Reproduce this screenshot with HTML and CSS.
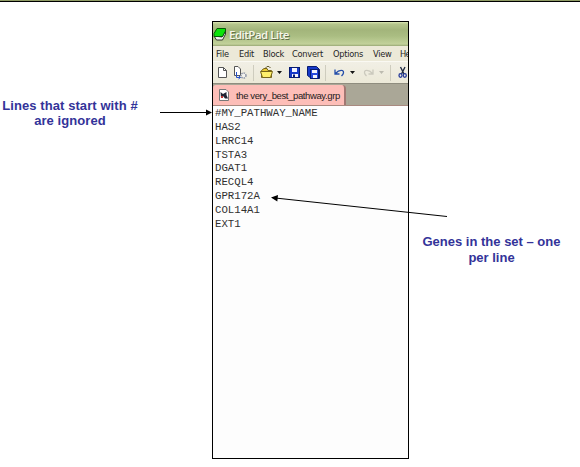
FILE: index.html
```
<!DOCTYPE html>
<html lang="en">
<head>
<meta charset="utf-8">
<title>Gene set file format</title>
<link rel="stylesheet" href="styles.css">
</head>
<body>
<div class="rule"></div>
<main class="figure">
  <p class="note note-left">Lines that start with #<br>are ignored</p>
  <section class="window">
    <header class="titlebar">
      <svg class="app-icon" width="15" height="16" viewBox="0 0 15 16">
        <path d="M1 9 L3.500 13 H9.500 L12.500 7 V4 L9 10Z" fill="#f4f4f4" stroke="#222" stroke-width=".9"/>
        <path d="M4 1.500 H12.500 V4 L9.500 9.500 H1 V6.500Z" fill="#0be30b" stroke="#075b07" stroke-width="1"/>
      </svg>
      <span class="title">EditPad Lite</span>
    </header>
    <nav class="menu">
      <span class="m-file">File</span><span class="m-edit">Edit</span><span class="m-block">Block</span><span class="m-convert">Convert</span><span class="m-options">Options</span><span class="m-view">View</span><span>He</span>
    </nav>
    <div class="toolbar">
      <svg width="195" height="22" viewBox="0 0 195 22">
        <path d="M5.5 5.5 H10.5 L13.5 8.5 V15.5 H5.5Z" fill="#fff" stroke="#555"/>
        <path d="M10.5 5.5 V8.5 H13.5" fill="none" stroke="#555"/>
        <path d="M21.5 4.5 H25 L27.5 7 V13.5 H21.5Z" fill="#fff" stroke="#555"/>
        <path d="M23.500 10 V15.500 H27 M25.500 13.500 L27.500 15.500 L25.500 17" fill="none" stroke="#2450c8"/>
        <circle cx="30.500" cy="13.500" r="2.500" fill="#f4f3ee" stroke="#8d95a5" stroke-width="1.500" stroke-dasharray="1.500 .8"/>
        <path d="M40.500 3 V19 M112.500 3 V19 M177.500 3 V19" stroke="#ceccbe"/>
        <path d="M48.500 15.500 V8.500 L51 6.500 H54 L55 8.500 H58.500 V15.500Z" fill="#e9c936" stroke="#766419"/>
        <path d="M47.500 9.500 H59.500 L57.500 15.500 H49.500Z" fill="#fff06b" stroke="#766419"/>
        <path d="M52.500 6 Q55 2.700 57.500 6" fill="none" stroke="#655d30"/>
        <path d="M64 9 H69 L66.500 12Z M137 9 H142 L139.500 12Z" fill="#151515"/>
        <rect x="76.500" y="5.500" width="10" height="10" fill="#1639c9" stroke="#071a70"/>
        <path d="M79 6 H84 V10 H79Z M79 12 H85 V15 H79Z" fill="#f4f4ff"/>
        <path d="M80 12.500 H82 V15 H80Z" fill="#071a70"/>
        <path d="M94.500 4.500 H103.500 L106.500 7.500 V16.500 H98.500 L94.500 13.500Z" fill="#1639c9" stroke="#071a70"/>
        <rect x="97.500" y="7.500" width="8" height="9" fill="#2749dc" stroke="#071a70"/>
        <path d="M99 8 H104 V11 H99Z M100 13 H104 V16 H100Z" fill="#f4f4ff"/>
        <path d="M122 7.500 V12 H126.500 M122.500 11.500 Q126 7.500 129.500 8.500 Q132 10.500 128.500 14" fill="none" stroke="#244eaa" stroke-width="1.300"/>
        <path d="M160 7.500 V12 H155.500 M159.500 11.500 Q156 7.500 152.500 8.500 Q150 10.500 153.500 14" fill="none" stroke="#cbc9bd" stroke-width="1.300"/>
        <path d="M166 9 H171 L168.500 12Z" fill="#bdbbb0"/>
        <path d="M187.500 5 L191 12 M192 5 L188.500 12" fill="none" stroke="#222c44" stroke-width="1.400"/>
        <ellipse cx="187.500" cy="13.500" rx="1.500" ry="1.800" fill="none" stroke="#273b9a" stroke-width="1.300"/>
        <ellipse cx="191.800" cy="13.500" rx="1.500" ry="1.800" fill="none" stroke="#273b9a" stroke-width="1.300"/>
      </svg>
    </div>
    <div class="tabs">
      <div class="tab">
        <svg width="12" height="14" viewBox="0 0 12 14">
          <path d="M1.500 1.500 H8 L10.500 4 V12.500 H1.500Z" fill="#fff" stroke="#777"/>
          <path d="M2.500 4 L5 6 L8.500 4 V7 L10 10.500 H7 L5 8 L3 10Z" fill="#202434"/>
          <path d="M3 8 H5 V10 H3Z" fill="#bd3030"/>
        </svg>
        <span class="filename">the very_best_pathway.grp</span>
      </div>
    </div>
    <pre class="editor">#MY_PATHWAY_NAME
HAS2
LRRC14
TSTA3
DGAT1
RECQL4
GPR172A
COL14A1
EXT1</pre>
  </section>
  <p class="note note-right">Genes in the set – one<br>per line</p>
</main>
<svg class="arrows" width="580" height="467" viewBox="0 0 580 467">
  <path d="M160 112.500 H207 M277 198.200 L447 216.500" fill="none" stroke="#000"/>
  <path d="M206 109.500 L212 112.500 L206 115.500Z M271 197.500 L278 195 L277.300 201.500Z"/>
</svg>
</body>
</html>
```
FILE: styles.css
```
body {
  margin: 0;
  width: 580px;
  height: 467px;
  overflow: hidden;
  background: #fff;
  font-family: "Liberation Sans", Arial, sans-serif;
}

.rule {
  height: 1px;
  background: #8f9b65;
  border-bottom: 1px solid #000;
}

.figure {
  display: grid;
  grid-template-columns: 212px 197px 171px;
  align-items: start;
  padding-top: 19px;
}

.note {
  margin: 0;
  color: #333399;
  font-weight: bold;
  font-size: 13px;
  text-align: center;
  white-space: nowrap;
}

.note-left {
  width: 140px;
  padding-top: 77px;
  line-height: 15px;
  letter-spacing: 0.08px;
}

.note-right {
  width: 165px;
  padding-top: 213px;
  line-height: 16px;
}

.window {
  box-sizing: border-box;
  height: 438px;
  display: flex;
  flex-direction: column;
  border: 1px solid #000;
  background: #fdfdfd;
  overflow: hidden;
}

.titlebar {
  flex: 0 0 24px;
  display: flex;
  align-items: center;
  background: linear-gradient(#dce8b5 0, #b5c58c 2px, #a3b57b 8px, #aabd82 14px, #c2d19a 22px, #98a875 24px);
}

.app-icon {
  margin-top: 1px;
}

.title {
  margin: 2px 0 0 1px;
  color: #f5f6e9;
  font: 11.5px "Open Sans", sans-serif;
  line-height: 16px;
  font-weight: 600;
  letter-spacing: -0.5px;
  text-shadow: 1px 1px 0 #65724a;
}

.menu {
  flex: 0 0 15px;
  display: flex;
  padding-left: 3px;
  background: #ece9d8;
  border-bottom: 1px solid #faf9f3;
  color: #252525;
  font: 9.2px/15px "DejaVu Sans Condensed", "DejaVu Sans", sans-serif;
  letter-spacing: -0.25px;
  white-space: nowrap;
}

.menu span { flex-shrink: 0; }
.m-file { width: 23px; }
.m-edit { width: 24px; }
.m-block { width: 29px; }
.m-convert { width: 41px; }
.m-options { width: 40px; }
.m-view { width: 27px; }
.menu span:last-child { letter-spacing: -0.8px; }

.toolbar {
  flex: 0 0 21px;
  overflow: hidden;
  background: linear-gradient(#f1efe5, #ece9d8);
  border-bottom: 1px solid #8f8d7f;
}

.toolbar svg { display: block; }

.tabs {
  flex: 0 0 20px;
  padding-top: 1px;
  background: #aaa797;
  border-bottom: 1px solid #a98a80;
}

.tab {
  box-sizing: border-box;
  width: 133px;
  height: 20px;
  display: flex;
  align-items: center;
  padding-left: 5px;
  gap: 6px;
  background: #fdbeb8;
  border-right: 2px solid #a17772;
  border-radius: 3px 4px 0 0;
}

.filename {
  color: #252020;
  font-size: 9.5px;
  letter-spacing: -0.38px;
  white-space: nowrap;
}

.editor {
  margin: 0;
  padding: 1px 0 0 2px;
  color: #303030;
  font: 10.7px/13.85px "Liberation Mono", "Courier New", monospace;
}

.arrows {
  position: absolute;
  inset: 0;
  pointer-events: none;
}
```
